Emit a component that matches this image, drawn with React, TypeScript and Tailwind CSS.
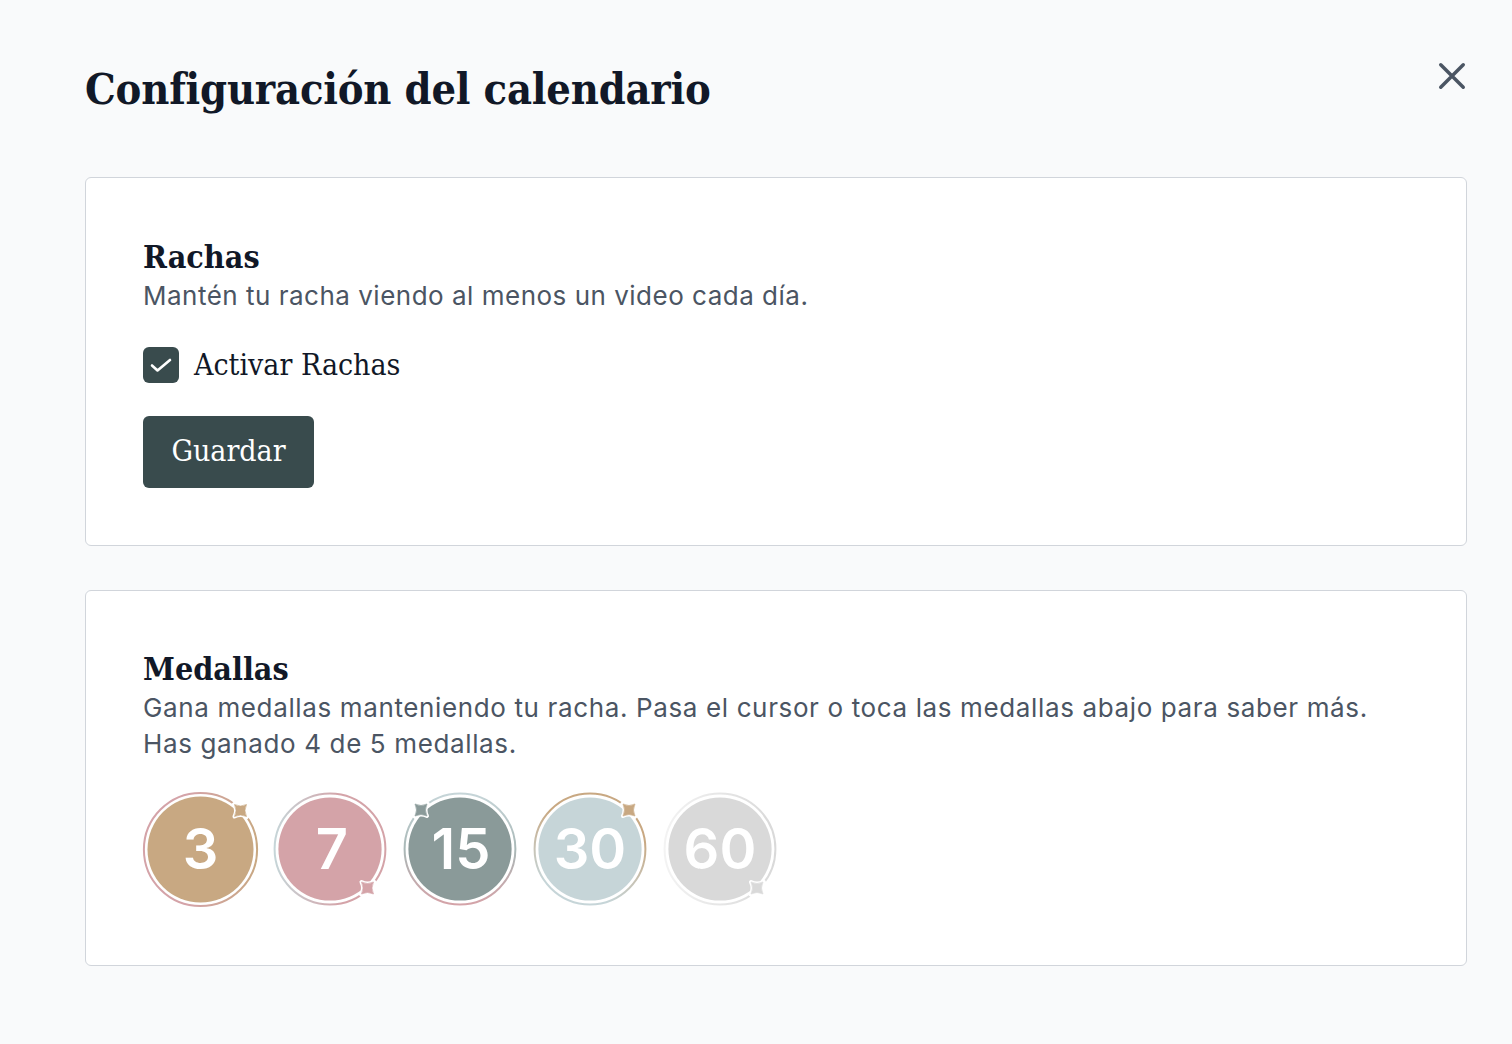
const serif = "font-['DejaVu_Serif_Condensed','DejaVu_Serif',serif]";

type MedalProps = {
    id: string;
    value: string;
    fill: string;
    from: string;
    via?: string;
    to: string;
    starColor: string;
    starX: number;
    starY: number;
    x1: number;
    y1: number;
    x2: number;
    y2: number;
    ringR?: number;
    discR?: number;
    center?: number;
    textDx?: number;
};

const medals: MedalProps[] = [
    { id: "m3", value: "3", fill: "#c8a882", from: "#c8a882", to: "#d4a3a8", starColor: "#c8a882", starX: 97.5, starY: 18.5, x1: 1, y1: 0.4, x2: 0.4, y2: 0.4, ringR: 56.6, discR: 53, center: 57.5 },
    { id: "m7", value: "7", fill: "#d4a3a8", from: "#c6d5d8", to: "#d4a3a8", starColor: "#d4a3a8", starX: 94.5, starY: 96, x1: 0, y1: 0.5, x2: 0.6, y2: 0.5, textDx: 2 },
    { id: "m15", value: "15", fill: "#8a9a99", from: "#c6d5d8", via: "#a9b8b7", to: "#d4a3a8", starColor: "#8a9a99", starX: 18, starY: 18, x1: 0.5, y1: 0, x2: 0.5, y2: 1, textDx: 1 },
    { id: "m30", value: "30", fill: "#c6d5d8", from: "#c8a882", to: "#c6d5d8", starColor: "#c8a882", starX: 96, starY: 18, x1: 0.6, y1: 0.3, x2: 0.4, y2: 0.9 },
    { id: "m60", value: "60", fill: "#d9d9d9", from: "#f3f3f3", to: "#d9d9d9", starColor: "#d9d9d9", starX: 94, starY: 96, x1: 0, y1: 0.5, x2: 1, y2: 0.5 },
];

const starPath = "M-6 -6 Q0 -3 6 -6 Q3 0 6 6 Q0 3 -6 6 Q-3 0 -6 -6 Z";

function Medal({ id, value, fill, from, via, to, starColor, starX, starY, x1, y1, x2, y2, ringR = 55.4, discR = 51.6, center = 57, textDx = 0 }: MedalProps) {
    return (
        <svg viewBox="0 0 114 114" className="h-[114px] w-[114px] overflow-visible">
            <defs>
                <linearGradient id={id} x1={x1} y1={y1} x2={x2} y2={y2}>
                    <stop offset="0" stopColor={from} />
                    {via && <stop offset="0.5" stopColor={via} />}
                    <stop offset="1" stopColor={to} />
                </linearGradient>
            </defs>
            <circle cx={center} cy={center} r={ringR} fill="none" stroke={`url(#${id})`} strokeWidth="2" />
            <circle cx={starX} cy={starY} r="11" fill="#ffffff" />
            <circle cx={center} cy={center} r={discR} fill={fill} />
            <g transform={`translate(${starX} ${starY})`}>
                <path d={starPath} fill="#ffffff" stroke="#ffffff" strokeWidth="4" strokeLinejoin="round" />
                <path d={starPath} fill={starColor} stroke={starColor} strokeWidth="0.6" strokeLinejoin="round" />
            </g>
            <text
                x={center + textDx}
                y="77"
                textAnchor="middle"
                fill="#ffffff"
                fontSize="56"
                fontWeight="600"
                fontFamily="Inter, sans-serif"
            >
                {value}
            </text>
        </svg>
    );
}

function CloseIcon() {
    return (
        <svg viewBox="0 0 30 30" className="h-[30px] w-[30px] stroke-[#4b5563]" fill="none" strokeWidth="3.5" strokeLinecap="round">
            <path d="M3.75 3.75 26.25 26.25M26.25 3.75 3.75 26.25" />
        </svg>
    );
}

export default function App() {
    return (
        <div className="min-h-[1044px] bg-[#f9fafb] pt-[61px] pr-[45px] pl-[85px] font-['Inter',sans-serif]">
            <div className="flex items-start justify-between">
                <h1 className={`${serif} text-[43px] leading-[56px] font-bold tracking-[-0.2px] text-[#111827]`}>Configuración del calendario</h1>
                <button type="button">
                    <CloseIcon />
                </button>
            </div>

            <section className="mt-[60px] h-[369px] rounded-md border border-[#d1d5db] bg-white px-[57px] pt-[58px]">
                <h2 className={`${serif} text-[32px] leading-[42px] font-bold text-[#111827]`}>Rachas</h2>
                <p className="text-[26px] leading-[36px] tracking-[0.5px] text-[#4b5563]">Mantén tu racha viendo al menos un video cada día.</p>
                <label className="mt-[33px] flex items-center gap-[15px]">
                    <span className="flex h-9 w-9 items-center justify-center rounded-md bg-[#394b4d]">
                        <svg viewBox="0 0 36 36" className="h-9 w-9 stroke-white" fill="none" strokeWidth="2.6" strokeLinecap="round" strokeLinejoin="round">
                            <path d="m9 18.5 5.5 5L27 13" />
                        </svg>
                    </span>
                    <span className={`${serif} text-[30px] leading-[36px] text-[#111827]`}>Activar Rachas</span>
                </label>
                <button type="button" className={`${serif} mt-[33px] h-[72px] w-[171px] rounded-md bg-[#394b4d] pb-1 text-[30px] text-white`}>
                    Guardar
                </button>
            </section>

            <section className="mt-[44px] h-[376px] rounded-md border border-[#d1d5db] bg-white px-[57px] pt-[57px]">
                <h2 className={`${serif} text-[32px] leading-[42px] font-bold text-[#111827]`}>Medallas</h2>
                <p className="text-[26px] leading-[36px] tracking-[0.63px] text-[#4b5563]">
                    Gana medallas manteniendo tu racha. Pasa el cursor o toca las medallas abajo para saber más.
                    <br />
                    Has ganado 4 de 5 medallas.
                </p>
                <div className="mt-[30px] flex gap-4">
                    {medals.map((medal) => (
                        <Medal key={medal.id} {...medal} />
                    ))}
                </div>
            </section>
        </div>
    );
}
